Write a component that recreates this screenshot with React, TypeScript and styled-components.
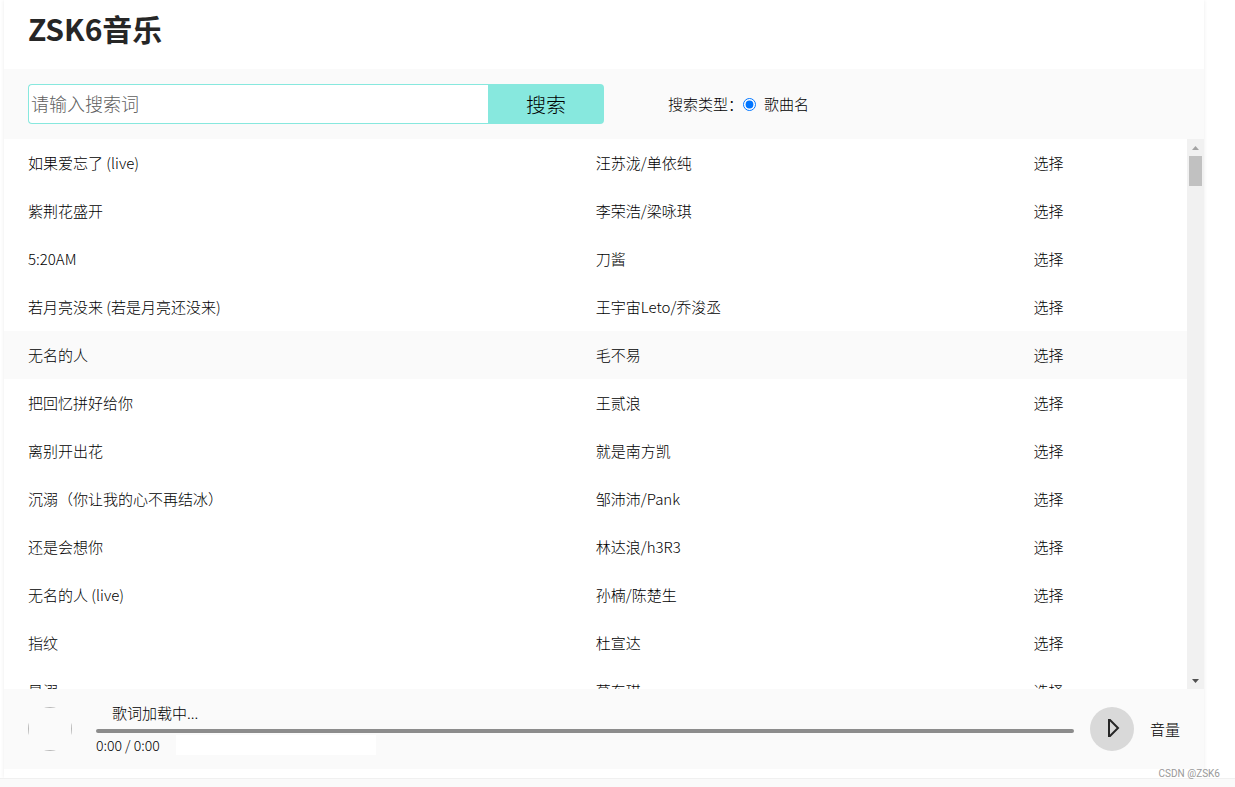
import React, { useRef, useState } from 'react';
import styled, { createGlobalStyle } from 'styled-components';

const GlobalStyle = createGlobalStyle`
  *, *::before, *::after { box-sizing: border-box; }
  body {
    margin: 0;
    background: #fafafa;
    color: #000;
    font: 300 15px/24px "Noto Sans CJK SC", "Noto Sans", sans-serif;
  }
  button, input { font-family: inherit; font-weight: inherit; color: inherit; }
`;

const Page = styled.div`
  position: relative;
  display: flex;
  flex-direction: column;
  height: 100vh;
  min-height: 400px;
  padding-bottom: 8px;
`;

const Sheet = styled.div`
  flex: 1;
  min-height: 0;
  display: flex;
  padding: 0 31px 0 4px;
  overflow: hidden;
  background: #fff;
  border-bottom: 1px solid #f0f0f0;
`;

const Player = styled.main`
  flex: 1;
  min-width: 0;
  display: flex;
  flex-direction: column;
  padding-bottom: 9px;
  background: #fff;
  box-shadow: 0 0 4px rgba(0, 0, 0, 0.08);
`;

const Header = styled.header`
  height: 69px;
  padding: 6px 24px;
`;

const Title = styled.h1`
  margin: 0;
  color: #262626;
  font-size: 30px;
  line-height: 45px;
  font-weight: 700;
`;

const SearchBar = styled.form`
  display: flex;
  align-items: center;
  gap: 64px;
  height: 70px;
  padding: 0 24px;
  background: #fafafa;
`;

const SearchGroup = styled.div`
  display: flex;
  width: 50%;
  height: 40px;
`;

const SearchInput = styled.input`
  flex: 1;
  min-width: 0;
  padding: 0 2px 2px;
  border: 1px solid #87e8de;
  border-right: 0;
  border-radius: 4px 0 0 4px;
  background: #fff;
  font-size: 18px;
  outline: 0;
  &::placeholder { color: #606060; opacity: 1; }
`;

const SearchButton = styled.button`
  flex: 0 0 116px;
  padding: 0;
  border: 0;
  border-radius: 0 4px 4px 0;
  background: #87e8de;
  font-size: 20px;
`;

const TypeGroup = styled.div`
  display: flex;
  align-items: center;
`;

const TypeLabel = styled.label`
  display: flex;
  align-items: center;
  gap: 8px;
`;

const Radio = styled.input`
  width: 13px;
  height: 13px;
  margin: 0;
`;

const ListPane = styled.section`
  flex: 1;
  min-height: 0;
  display: flex;
`;

const ListScroll = styled.div`
  flex: 1;
  overflow-y: auto;
  scrollbar-width: none;
`;

const SongTable = styled.table`
  width: 100%;
  table-layout: fixed;
  border-collapse: collapse;
`;

const SongRow = styled.tr<{ $active?: boolean }>`
  height: 48px;
  background: ${(p) => (p.$active ? '#fafafa' : '#fff')};
`;

const SongCell = styled.td<{ $width: string }>`
  width: ${(p) => p.$width};
  padding: 0 24px;
  white-space: nowrap;
`;

const SelectButton = styled.button`
  padding: 0;
  border: 0;
  background: none;
  font-size: 15px;
  line-height: 24px;
  cursor: pointer;
`;

const ScrollRail = styled.div`
  display: flex;
  flex-direction: column;
  width: 17px;
  background: #f1f1f1;
`;

const ScrollArrow = styled.button`
  display: flex;
  align-items: center;
  justify-content: center;
  height: 17px;
  padding: 0;
  border: 0;
  background: none;
`;

const ScrollTrack = styled.div`
  flex: 1;
  padding: 0 2px;
`;

const ScrollThumb = styled.div`
  height: 30px;
  background: #c1c1c1;
`;

const Controls = styled.footer`
  display: flex;
  align-items: center;
  gap: 16px;
  height: 80px;
  padding: 0 24px;
  background: #fafafa;
`;

const Cover = styled.div`
  width: 44px;
  height: 44px;
  margin-right: 8px;
  border-radius: 50%;
  overflow: hidden;
`;

const CoverFrame = styled.div`
  height: 100%;
  border: 1px solid #b8b8b8;
`;

const Timeline = styled.div`
  flex: 1;
  min-width: 0;
  display: flex;
  flex-direction: column;
  padding-bottom: 4px;
`;

const Lyric = styled.div`
  padding: 0 16px 2px;
  line-height: 28px;
`;

const Progress = styled.input`
  appearance: none;
  display: block;
  width: 100%;
  height: 4px;
  margin: 0 0 2px;
  border-radius: 2px;
  background: #8c8c8c;
  &::-webkit-slider-thumb { appearance: none; width: 0; height: 0; }
`;

const TimeRow = styled.div`
  display: flex;
  height: 20px;
  font-size: 14px;
  line-height: 20px;
`;

const Time = styled.div`
  width: 80px;
`;

const Visualizer = styled.div`
  width: 200px;
  background: #fff;
`;

const PlayButton = styled.button`
  display: flex;
  align-items: center;
  justify-content: center;
  width: 44px;
  height: 44px;
  padding: 0;
  border: 0;
  border-radius: 50%;
  background: #d9d9d9;
`;

const VolumeButton = styled.button`
  padding: 0;
  border: 0;
  background: none;
  font-size: 15px;
  line-height: 24px;
`;

const Watermark = styled.div`
  position: absolute;
  right: 15px;
  bottom: 6px;
  color: #999;
  font: 400 10px/14px Roboto, "Liberation Sans", sans-serif;
`;

const songs: [string, string][] = [
  ['如果爱忘了 (live)', '汪苏泷/单依纯'],
  ['紫荆花盛开', '李荣浩/梁咏琪'],
  ['5:20AM', '刀酱'],
  ['若月亮没来 (若是月亮还没来)', '王宇宙Leto/乔浚丞'],
  ['无名的人', '毛不易'],
  ['把回忆拼好给你', '王贰浪'],
  ['离别开出花', '就是南方凯'],
  ['沉溺（你让我的心不再结冰）', '邹沛沛/Pank'],
  ['还是会想你', '林达浪/h3R3'],
  ['无名的人 (live)', '孙楠/陈楚生'],
  ['指纹', '杜宣达'],
  ['是溺', '葛东琪'],
];

export default function App() {
  const [query, setQuery] = useState('');
  const list = useRef<HTMLDivElement>(null);
  const scroll = (top: number) => list.current?.scrollBy({ top });

  return (
    <Page>
      <GlobalStyle />
      <Sheet>
        <Player>
          <Header>
            <Title>ZSK6音乐</Title>
          </Header>
          <SearchBar onSubmit={(e) => e.preventDefault()}>
            <SearchGroup>
              <SearchInput
                type="text"
                aria-label="搜索词"
                placeholder="请输入搜索词"
                value={query}
                onChange={(e) => setQuery(e.target.value)}
              />
              <SearchButton type="submit">搜索</SearchButton>
            </SearchGroup>
            <TypeGroup>
              <span>搜索类型：</span>
              <TypeLabel>
                <Radio type="radio" name="type" defaultChecked />
                歌曲名
              </TypeLabel>
            </TypeGroup>
          </SearchBar>
          <ListPane>
            <ListScroll ref={list}>
              <SongTable>
                <tbody>
                  {songs.map(([name, singer], i) => (
                    <SongRow key={i} $active={i === 4}>
                      <SongCell $width="48%">{name}</SongCell>
                      <SongCell $width="37%">{singer}</SongCell>
                      <SongCell $width="15%">
                        <SelectButton type="button">选择</SelectButton>
                      </SongCell>
                    </SongRow>
                  ))}
                </tbody>
              </SongTable>
            </ListScroll>
            <ScrollRail>
              <ScrollArrow type="button" aria-label="向上滚动" onClick={() => scroll(-48)}>
                <svg width="7" height="4" viewBox="0 0 7 4" fill="#a3a3a3">
                  <path d="M3.5 0 7 4H0z" />
                </svg>
              </ScrollArrow>
              <ScrollTrack>
                <ScrollThumb />
              </ScrollTrack>
              <ScrollArrow type="button" aria-label="向下滚动" onClick={() => scroll(48)}>
                <svg width="7" height="4" viewBox="0 0 7 4" fill="#505050">
                  <path d="M3.5 4 0 0h7z" />
                </svg>
              </ScrollArrow>
            </ScrollRail>
          </ListPane>
          <Controls>
            <Cover>
              <CoverFrame />
            </Cover>
            <Timeline>
              <Lyric>歌词加载中...</Lyric>
              <Progress type="range" aria-label="播放进度" min={0} max={100} defaultValue={0} />
              <TimeRow>
                <Time>0:00 / 0:00</Time>
                <Visualizer />
              </TimeRow>
            </Timeline>
            <PlayButton type="button" aria-label="播放">
              <svg width="20" height="20" viewBox="0 0 20 20" fill="none" stroke="#262626" strokeWidth="2">
                <path d="M7 1H8L16 9 8 17H7z" />
              </svg>
            </PlayButton>
            <VolumeButton type="button">音量</VolumeButton>
          </Controls>
        </Player>
      </Sheet>
      <Watermark>CSDN @ZSK6</Watermark>
    </Page>
  );
}
